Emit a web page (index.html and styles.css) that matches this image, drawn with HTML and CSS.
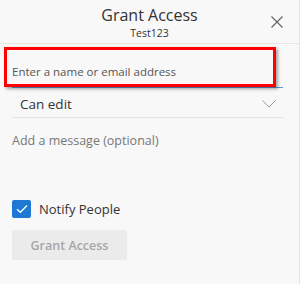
FILE: index.html
```html
<!DOCTYPE html>
<html lang="en">
<head>
    <meta charset="UTF-8">
    <title>Grant Access</title>
    <link rel="stylesheet" href="styles.css">
</head>
<body>
    <div class="panel">
        <!-- Header -->
        <header class="header">
            <div class="title">Grant Access</div>
            <div class="subtitle">Test123</div>
            <button class="close" aria-label="Close">
                <svg width="12" height="12" viewBox="0 0 12 12">
                    <path d="M0.5 0.5 L11.5 11.5 M11.5 0.5 L0.5 11.5" stroke="#666" stroke-width="1.2" fill="none"/>
                </svg>
            </button>
        </header>

        <div class="content">
            <div class="field">
                <span class="placeholder">Enter a name or email address</span>
            </div>

            <div class="select">
                <span>Can edit</span>
                <svg width="14" height="8" viewBox="0 0 14 8">
                    <path d="M0.5 0.5 L7 7 L13.5 0.5" stroke="#999" stroke-width="1" fill="none"/>
                </svg>
            </div>

            <div class="message">Add a message (optional)</div>

            <label class="notify">
                <span class="checkbox">
                    <svg width="12" height="10" viewBox="0 0 12 10">
                        <path d="M1 5.2 L4.3 8.3 L11 1.5" stroke="#fff" stroke-width="1.3" fill="none"/>
                    </svg>
                </span>
                Notify People
            </label>

            <button class="grant" disabled>Grant Access</button>
        </div>

        <!-- annotation box -->
        <div class="highlight"></div>
    </div>
</body>
</html>
```

FILE: styles.css
```css
/* Global */
body {
    margin: 0;
    font-family: "Open Sans", "Noto Sans", sans-serif;
    background-color: #f8f8f8;
    color: #333;
}

.panel {
    position: relative;
    width: 299px;
    height: 284px;
    border-right: 1px solid #e4e4e4;
}

/* Header */
.header {
    position: relative;
    height: 43px;
    border-bottom: 1px solid #e6e6e6;
    text-align: center;
}

.title {
    padding-top: 4px;
    font-size: 16px;
    line-height: 22px;
    color: #333;
}

.subtitle {
    font-size: 10.5px;
    line-height: 14px;
    color: #333;
}

.close {
    position: absolute;
    top: 16px;
    right: 16px;
    width: 12px;
    height: 12px;
    padding: 0;
    border: none;
    background: none;
    line-height: 0;
}

/* Content */
.content {
    padding: 0 16px 0 12px;
}

.field {
    height: 43px;
    border-bottom: 1px solid #5b9bd5;
    display: flex;
    align-items: flex-end;
}

.placeholder {
    font-size: 11.5px;
    line-height: 16px;
    padding-bottom: 7px;
    color: #555;
}

.select {
    height: 30px;
    display: flex;
    justify-content: space-between;
    align-items: center;
    padding: 2px 7px 0 8px;
    box-sizing: border-box;
    border-bottom: 1px solid #e3e3e3;
    font-size: 13.5px;
}

.message {
    height: 82px;
    padding-top: 15px;
    box-sizing: border-box;
    font-size: 12.5px;
    line-height: 16px;
    color: #777;
}

.notify {
    display: flex;
    align-items: center;
    gap: 8px;
    height: 18px;
    font-size: 13px;
    color: #333;
}

.checkbox {
    width: 19px;
    height: 18px;
    border-radius: 2px;
    background-color: #1f78d1;
    display: flex;
    justify-content: center;
    align-items: center;
}

.grant {
    margin-top: 12px;
    width: 115px;
    height: 30px;
    border: none;
    border-radius: 2px;
    background-color: #ebebeb;
    color: #a6a6a6;
    font-family: inherit;
    font-size: 12.5px;
    font-weight: 600;
}

/* Annotation overlay */
.highlight {
    position: absolute;
    left: 4px;
    top: 47px;
    width: 266px;
    height: 34px;
    border: 3px solid #f00;
    box-shadow: 2px 2px 3px rgba(0, 0, 0, 0.35);
}
```
